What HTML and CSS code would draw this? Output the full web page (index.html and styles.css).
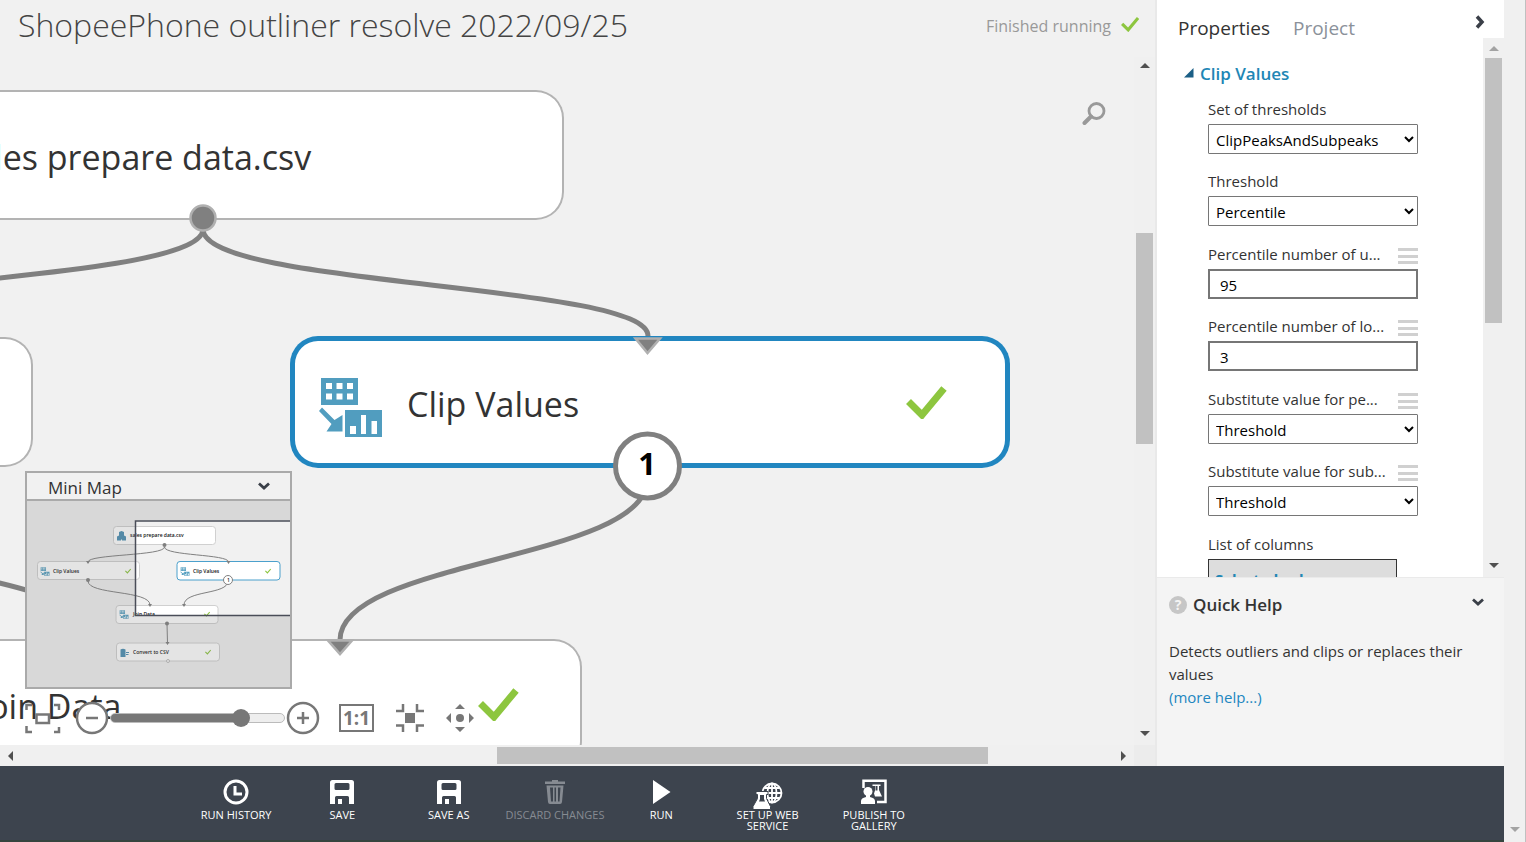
FILE: index.html
```html
<!DOCTYPE html>
<html lang="en">
<head>
<meta charset="utf-8">
<title>ShopeePhone outliner resolve 2022/09/25</title>
<link rel="stylesheet" href="styles.css">
</head>
<body>
<svg class="defs" aria-hidden="true">
  <symbol id="check" viewBox="0 0 40 34"><path d="M2.500 16.500 L16 30 L38 3.500" fill="none" stroke="#8dc63f" stroke-width="7"/></symbol>
  <symbol id="chevron" viewBox="0 0 12 8"><path d="M1 1.500 L6 6 L11 1.500" fill="none" stroke="#3a3f48" stroke-width="2.800"/></symbol>
  <symbol id="module" viewBox="0 0 66 62">
    <path fill="#519dbf" fill-rule="evenodd" d="M3 1h37v27H3zM8 6v6h6V6zM18.500 6v6h6V6zM29 6v6h6V6zM8 16.500v6h6v-6zM18.500 16.500v6h6v-6zM29 16.500v6h6v-6zM27 33h37v27H27zM32 49v8h6v-8zM43 38v19h5V38zM53.500 44v13h5.500V44zM4 30.500L16.500 43 24.500 38v16.500H8.500L13.500 47 1 34z"/>
  </symbol>
  <symbol id="save" viewBox="0 0 24 24"><path fill="#fff" fill-rule="evenodd" d="M2.500 0h19Q24 0 24 2.500V24h-5v-6.500q0-1.500-1.500-1.500h-11Q5 16 5 17.500V24H0V2.500Q0 0 2.500 0zM6 3Q4.500 3 4.500 4.500v4Q4.500 10 6 10h12q1.500 0 1.500-1.500v-4Q19.500 3 18 3zM8 19h4v5H8z"/></symbol>
</svg>
<div class="app">
  <div class="main">
    <div class="content">
      <main class="workspace">
        <header class="title-bar">
          <h1>ShopeePhone outliner resolve 2022/09/25</h1>
          <span class="status">Finished running <svg class="status-check"><use href="#check"/></svg></span>
        </header>
        <div class="canvas">
          <svg class="edges">
            <g fill="none" stroke="#808080" stroke-width="5">
              <path d="M203 172C203 230 648 226 648 279"/>
              <path d="M203 172C203 230 -330 226 -330 279"/>
              <path d="M647 423C647 503 340 503 340 583"/>
              <path d="M-330 423C-330 503 102 503 102 583"/>
            </g>
          </svg>
          <div class="node node-data"><span>sales prepare data.csv</span></div>
          <div class="node node-left"></div>
          <div class="node node-clip"><svg class="node-icon"><use href="#module"/></svg><span>Clip Values</span><svg class="node-check"><use href="#check"/></svg></div>
          <div class="node node-join"><span>Join Data</span><svg class="node-check"><use href="#check"/></svg></div>
          <svg class="edges">
            <circle cx="203" cy="161" r="12.500" fill="#808080" stroke="#b0b0b0" stroke-width="2.500"/>
            <g fill="#808080" stroke="#b0b0b0" stroke-width="2.500">
              <path d="M635.500 281.500H660L647.500 296z"/><path d="M328 583.500H352L340 597z"/>
            </g>
            <circle cx="647.500" cy="409" r="32" fill="#fff" stroke="#808080" stroke-width="5"/>
            <text class="port-number" x="647" y="418" text-anchor="middle">1</text>
          </svg>
          <button class="search" aria-label="Search"><svg viewBox="0 0 24 24"><circle cx="14.500" cy="9" r="7.500" fill="none" stroke="#999" stroke-width="2.800"/><path d="M9 14.500L2.500 21" stroke="#999" stroke-width="4" stroke-linecap="round"/></svg></button>
          <section class="minimap">
            <header><h2>Mini Map</h2><button aria-label="Collapse mini map"><svg class="chev"><use href="#chevron"/></svg></button></header>
            <svg class="map" viewBox="27 501 263 186">
              <g fill="#fff" stroke="#d0d0d0">
                <rect x="113.500" y="526.500" width="102" height="18" rx="3"/>
                <rect x="37.500" y="561.500" width="102" height="18" rx="3"/>
                <rect x="177" y="561.500" width="103" height="18.500" rx="3" stroke="#4ba0cc"/>
                <rect x="116" y="605.500" width="102" height="18" rx="3"/>
                <rect x="116.500" y="643" width="103" height="18" rx="3"/>
              </g>
              <g fill="none" stroke="#808080">
                <path d="M164.500 547C164.500 556 88 554 88 562"/><path d="M164.500 547C164.500 556 228.500 554 228.500 562"/>
                <path d="M88 581C88 595 150 590 150 605"/><path d="M228 581C228 595 184 590 184 605"/><path d="M167 624L167.500 643"/>
              </g>
              <g fill="#808080"><circle cx="164.500" cy="545" r="2"/><circle cx="88" cy="580" r="2"/><circle cx="167" cy="623.500" r="2"/>
                <path d="M86 561h4l-2 3zM226.500 561h4l-2 3zM148 604h4l-2 3zM182 604h4l-2 3zM165.500 642h4l-2 3z"/></g>
              <circle cx="168" cy="661" r="1.500" fill="#fff" stroke="#bbb"/>
              <circle cx="228" cy="580" r="4.500" fill="#fff" stroke="#808080"/>
              <g class="map-text">
                <text x="130" y="537">sales prepare data.csv</text><text x="53" y="573">Clip Values</text><text x="193" y="573">Clip Values</text>
                <text x="133" y="616">Join Data</text><text x="133" y="654">Convert to CSV</text><text x="227" y="582">1</text>
              </g>
              <g fill="#4b8fb3"><path d="M119 532l2.500-1 2.500 1v3.500l2 1v4h-4v-1h-1v1h-4v-4l2-1z"/><path d="M120.500 649.500q2.500-1.500 5 0v7.500h-5zM126 652h3v1h-3zM126 654h2.500v1H126z"/></g>
              <use href="#module" x="40" y="567" width="10" height="9"/><use href="#module" x="180" y="567" width="10" height="9"/><use href="#module" x="119" y="610" width="10" height="9"/>
              <use href="#check" x="125" y="568" width="6" height="6"/><use href="#check" x="265" y="568" width="6" height="6"/><use href="#check" x="204" y="611" width="6" height="6"/><use href="#check" x="205" y="649" width="6" height="6"/>
              <path d="M27 501H290V520.500H135V615.500H290V687H27z" fill="#797979" fill-opacity=".2"/>
              <path d="M292 521H135.500V615.500H292" fill="none" stroke="#4a4d58" stroke-width="1.500"/>
            </svg>
          </section>
          <div class="zoom-bar">
            <button aria-label="Pan overview"><svg width="36" height="32" viewBox="0 0 36 32" fill="none" stroke="#777" stroke-width="2.500"><path d="M1.500 8V3H7M29 3h5v5M1.500 24v6H7M29 30h5v-5"/><path d="M11.500 12.500h12.500v8.500h-12.500z"/></svg></button>
            <button aria-label="Zoom out"><svg width="34" height="34" viewBox="0 0 34 34" fill="#fff" stroke="#777" stroke-width="2.500"><circle cx="17" cy="17" r="15"/><path d="M11 17h12"/></svg></button>
            <input type="range" min="0" max="100" value="78" aria-label="Zoom level">
            <button aria-label="Zoom in"><svg width="34" height="34" viewBox="0 0 34 34" fill="#fff" stroke="#777" stroke-width="2.500"><circle cx="17" cy="17" r="15"/><path d="M11 17h12M17 11v12"/></svg></button>
            <button class="actual" aria-label="Actual size">1:1</button>
            <button aria-label="Fit to screen"><svg width="28" height="28" viewBox="0 0 28 28" fill="none" stroke="#777" stroke-width="2.500"><path d="M0 7H7V0M28 7H21V0M0 21.500H7V28M28 21.500H21V28"/><path d="M9 9h10v10H9z" fill="#777" stroke="none"/></svg></button>
            <button aria-label="Pan"><svg width="28" height="28" viewBox="0 0 28 28" fill="#777"><circle cx="14" cy="14" r="4"/><path d="M14 0l5 5H9zM14 28l5-5H9zM0 14l5-5v10zM28 14l-5-5v10z"/></svg></button>
          </div>
        </div>
        <div class="vbar canvas-vbar"><i class="up"></i><div class="track"><b></b></div><i class="down"></i></div>
        <div class="hbar"><i class="left"></i><div class="track"><b></b></div><i class="right"></i></div>
        <div class="corner"></div>
      </main>
      <aside class="sidebar">
        <nav class="tabs"><button class="active">Properties</button><button>Project</button><button class="collapse" aria-label="Collapse panel"><svg viewBox="0 0 10 14"><path d="M2 1.500L7 7L2 12.500" fill="none" stroke="#3a3f48" stroke-width="3.500"/></svg></button></nav>
        <div class="props">
          <form class="fields">
            <h2><svg viewBox="0 0 10 10"><path d="M9.500 0V9.500H0z" fill="#1b5f86"/></svg>Clip Values</h2>
            <div class="field"><label for="f1">Set of thresholds</label><select id="f1"><option>ClipPeaksAndSubpeaks</option></select></div>
            <div class="field"><label for="f2">Threshold</label><select id="f2"><option>Percentile</option></select></div>
            <div class="field"><label for="f3">Percentile number of u...</label><button type="button" class="menu" aria-label="Options"></button><input id="f3" type="text" value="95"></div>
            <div class="field"><label for="f4">Percentile number of lo...</label><button type="button" class="menu" aria-label="Options"></button><input id="f4" type="text" value="3"></div>
            <div class="field"><label for="f5">Substitute value for pe...</label><button type="button" class="menu" aria-label="Options"></button><select id="f5"><option>Threshold</option></select></div>
            <div class="field"><label for="f6">Substitute value for sub...</label><button type="button" class="menu" aria-label="Options"></button><select id="f6"><option>Threshold</option></select></div>
            <div class="field"><span class="label">List of columns</span><div class="columns">Selected columns:</div></div>
          </form>
          <div class="vbar props-vbar"><i class="up muted"></i><div class="track"><b></b></div><i class="down"></i></div>
        </div>
        <section class="help">
          <header><span class="q">?</span><h2>Quick Help</h2><button aria-label="Collapse help"><svg class="chev"><use href="#chevron"/></svg></button></header>
          <p>Detects outliers and clips or replaces their values<br><a href="#">(more help...)</a></p>
        </section>
      </aside>
    </div>
    <footer class="commands">
      <div class="command-list">
      <button><svg viewBox="0 0 26 26" fill="none" stroke="#fff" stroke-width="3"><circle cx="13" cy="13" r="11"/><path d="M12 7v8h7"/></svg>RUN HISTORY</button>
      <button><svg viewBox="-1 -1 26 26"><use href="#save" width="24" height="24"/></svg>SAVE</button>
      <button><svg viewBox="-1 -1 26 26"><use href="#save" width="24" height="24"/></svg>SAVE AS</button>
      <button disabled><svg viewBox="0 0 26 26"><path fill="#868b92" fill-rule="evenodd" d="M10 1h6v1.500h7V5H3V2.500h7zM4.500 6.500h17L20 23q-.200 2-2 2H8q-1.800 0-2-2zM8 8.500l1 14h2v-14zM12.500 8.500v14h1.500v-14zM16 8.500v14h1.500l1-14z"/></svg>DISCARD CHANGES</button>
      <button><svg viewBox="0 0 26 26"><path fill="#fff" d="M5 1v24L22.500 13z"/></svg>RUN</button>
      <button><svg class="wide" viewBox="0 0 30 26"><g fill="none" stroke="#fff" stroke-width="1.800"><circle cx="19" cy="14" r="9.500"/><ellipse cx="19" cy="14" rx="4.500" ry="9.500"/><path d="M19 4.500v19M9.500 14h19M11.500 9h15M11.500 19h15"/></g><path d="M3 12.500h12v3h-1.500v4l4 8v3H0v-3L4.500 19.500v-4H3z" fill="#fff" stroke="#3d444e"/><path d="M7 16h4v4l1 2.500H6l1-2.500z" fill="#3d444e"/></svg>SET UP WEB SERVICE</button>
      <button><svg viewBox="0 0 26 26"><path fill="none" stroke="#fff" stroke-width="2.500" d="M2.500 9V1.800H24.500V23H16"/><path d="M11.500 5.500h8V7h-1.500v4l3 6.500h-7l-1-3 1-3V7h-2.500z" fill="#fff"/><path d="M14.500 7h2v4.500h-2z" fill="#3d444e"/><circle cx="7" cy="12.500" r="4.500" fill="#fff"/><path fill="#fff" d="M5 15h4v3q5 1 5 4v3H0v-3q0-3 5-4z"/></svg>PUBLISH TO GALLERY</button>
      </div>
    </footer>
  </div>
  <div class="page-bar"><i class="down muted"></i></div>
</div>
</body>
</html>
```
FILE: styles.css
```css
* { box-sizing: border-box; }
body { margin: 0; font-family: "Open Sans", "Noto Sans", sans-serif; font-size: 15px; color: #333; }
button { border: 0; padding: 0; background: none; font: inherit; color: inherit; }
h1, h2, p { margin: 0; }
svg { display: block; }
.defs { position: absolute; width: 0; height: 0; }
.app { display: flex; height: 100vh; overflow: hidden; background: #f0f0f0; }
.main { flex: 1; min-width: 0; display: flex; flex-direction: column; }
.content { flex: 1; min-height: 0; display: flex; }
.page-bar { width: 22px; border-right: 1px solid #c0c0c0; display: flex; flex-direction: column; justify-content: flex-end; align-items: center; padding-bottom: 10px; }

.workspace { flex: 1; min-width: 0; display: grid; grid-template-columns: minmax(0, 1fr) 21px; grid-template-rows: 57px minmax(0, 1fr) 21px; background: #f1f1f1; border-right: 2px solid #e9e9e9; }
.title-bar { grid-column: 1 / 3; display: flex; justify-content: space-between; padding: 0 16px 0 18px; white-space: nowrap; }
h1 { font-size: 32px; line-height: 50px; font-weight: 300; color: #444; }
.status { display: flex; gap: 10px; font-size: 16px; line-height: 52px; color: #999; }
.status-check { width: 18px; height: 16px; margin-top: 16px; }

.canvas { position: relative; overflow: hidden; }
.edges { position: absolute; inset: 0; width: 100%; height: 100%; }
.node { position: absolute; width: 720px; height: 130px; padding: 0 63px 0 117px; border-radius: 28px; background: #fff; box-shadow: inset 0 0 0 2px #b3b3b3; display: flex; align-items: center; justify-content: space-between; font-size: 34px; white-space: nowrap; }
.node span { padding-top: 4px; }
.node-data { left: -156px; top: 33px; padding-left: 115px; }
.node-left { left: -687px; top: 280px; }
.node-clip { left: 290px; top: 279px; height: 132px; box-shadow: inset 0 0 0 5px #2186c0; }
.node-join { left: -138px; top: 582px; }
.node-icon { position: absolute; left: 28px; top: 41px; width: 66px; height: 62px; }
.node-check { width: 42px; height: 34px; }
.port-number { font-size: 31px; font-weight: 700; fill: #000; }
.search { position: absolute; right: 28px; top: 45px; width: 24px; height: 24px; }

.minimap { position: absolute; left: 25px; top: 414px; width: 267px; border: 2px solid #aaa; background: #f1f1f1; }
.minimap header { display: flex; align-items: center; justify-content: space-between; height: 28px; padding: 0 20px 0 21px; border-bottom: 2px solid #aaa; }
.minimap h2 { font-size: 17px; font-weight: 400; line-height: 28px; padding-top: 3px; }
.chev { width: 12px; height: 8px; }
.map { width: 263px; height: 186px; background: #f1f1f1; }
.map-text { font-size: 5px; font-weight: 600; fill: #111; }

.zoom-bar { position: absolute; left: 25px; top: 644px; display: flex; align-items: center; height: 34px; }
.zoom-bar button:nth-of-type(2) { margin-left: 14px; }
.zoom-bar input { appearance: none; width: 175px; height: 10px; margin: 0 1px; border: 1px solid #bbb; border-radius: 5px; background: linear-gradient(90deg, #777 75%, #eee 75%); }
.zoom-bar input::-webkit-slider-thumb { appearance: none; width: 18px; height: 18px; border-radius: 50%; background: #777; }
.zoom-bar .actual { width: 35px; height: 28px; margin: 0 22px 0 19px; border: 2px solid #777; background: #fff; color: #777; font-size: 19px; font-weight: 700; line-height: 22px; }
.zoom-bar .actual ~ button + button { margin-left: 22px; }

.vbar, .hbar { display: flex; align-items: center; justify-content: space-between; background: #f0f0f0; }
.vbar { flex-direction: column; padding: 6px 2px 9px; }
.hbar { padding: 2px 8px; }
.track { flex: 1; display: grid; }
.track b { background: #c1c1c1; }
.vbar .track { width: 100%; }
.hbar .track { height: 100%; }
.vbar b { grid-row: 2; }
.hbar b { grid-column: 2; }
.canvas-vbar .track { grid-template-rows: 165fr 211fr 287fr; }
.hbar .track { grid-template-columns: 484fr 491fr 133fr; }
.props-vbar { padding: 8px 2px 9px; }
.props-vbar .track { grid-template-rows: 7fr 264fr 240fr; }
.corner { background: #ececec; }
.up, .down { border: 5px solid transparent; }
.up { border-top: 0; border-bottom-color: #505050; }
.down { border-bottom: 0; border-top-color: #505050; }
.left, .right { border: 5px solid transparent; }
.left { border-left: 0; border-right-color: #505050; }
.right { border-right: 0; border-left-color: #505050; }
.up.muted { border-bottom-color: #a3a3a3; }
.down.muted { border-top-color: #a3a3a3; }

.sidebar { width: 347px; display: flex; flex-direction: column; background: #fff; }
.tabs { display: flex; align-items: flex-start; gap: 23px; height: 38px; padding: 0 19px 0 21px; font-size: 19px; line-height: 56px; color: #8b919a; }
.tabs .active { color: #333; }
.collapse { margin: 15px 0 0 auto; }
.collapse svg { width: 10px; height: 14px; }
.props { flex: 1; min-height: 0; display: grid; grid-template-columns: 1fr 21px; grid-template-rows: 100%; }
.fields { overflow: hidden; padding: 21px 65px 0 51px; }
.fields h2 { display: flex; align-items: center; gap: 6px; height: 28px; margin: 0 0 9px -24px; font-size: 17px; font-weight: 600; color: #2186b5; }
.fields h2 svg { width: 10px; height: 10px; }
.field { display: grid; grid-template-columns: 1fr 20px; grid-template-rows: 28px auto; padding-bottom: 14px; }
.field:nth-child(odd) { padding-bottom: 15px; }
.field label, .label { line-height: 26px; white-space: nowrap; }
.field select, .field input { grid-column: 1 / 3; width: 100%; height: 30px; font: inherit; color: #000; background: #fff; border-radius: 0; }
.field select { padding: 1px 0 0 3px; border: 1px solid #767676; border-radius: 1px; }
.field input { padding: 2px 10px 0; border: 2px solid #767676; }
.menu { height: 16px; margin-top: 7px; background: linear-gradient(#d0d0d0 3px, transparent 3px 7px, #d0d0d0 7px 10px, transparent 10px 13px, #d0d0d0 13px); }
.columns { grid-column: 1 / 3; width: 189px; height: 60px; padding: 9px 6px; border: 1px solid #333; background: #ddd; color: #2186b5; font-weight: 700; }

.help { height: 189px; padding: 13px 20px 0 12px; border-top: 1px solid #eaeaea; background: #f4f4f4; }
.help header { display: flex; align-items: center; height: 27px; gap: 6px; }
.help h2 { font-size: 17px; font-weight: 600; }
.help button { margin: 0 0 6px auto; }
.q { width: 18px; height: 18px; border-radius: 50%; background: #c6c6c6; color: #f4f4f4; font-size: 14px; font-weight: 700; line-height: 18px; text-align: center; }
.help p { margin-top: 22px; line-height: 23px; }
.help a { color: #2186c0; text-decoration: none; }

.commands { height: 76px; padding: 13px 0 0 183px; background: #3d444e; border-bottom: 2px solid #35453f; color: #fff; font-size: 11px; line-height: 11px; }
.command-list { display: grid; grid-template-columns: repeat(7, 1fr); max-width: 744px; }
.commands button { padding: 0 16px; display: flex; flex-direction: column; align-items: center; gap: 4px; }
.commands svg { width: 26px; height: 26px; overflow: visible; }
.commands svg.wide { width: 30px; }
.commands button:disabled { color: #868b92; padding: 0; }
```
